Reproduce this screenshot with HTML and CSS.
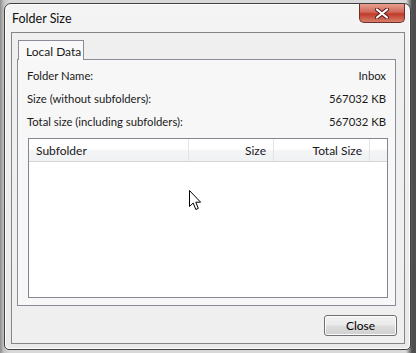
FILE: index.html
```html
<!DOCTYPE html>
<html lang="en">
<head>
    <meta charset="UTF-8">
    <title>Folder Size</title>
    <link rel="stylesheet" href="styles.css">
</head>
<body>
    <div class="desktop">
        <div class="window">
            <div class="titlebar">
                <span class="title">Folder Size</span>
                <button class="close-x">
                    <svg width="14" height="11" viewBox="0 0 14 11">
                        <path d="M2 1.5 L12 9.5 M12 1.5 L2 9.5" stroke="#5a1a1a" stroke-width="4" stroke-linecap="round"/>
                        <path d="M2 1.5 L12 9.5 M12 1.5 L2 9.5" stroke="#ffffff" stroke-width="2.2" stroke-linecap="round"/>
                    </svg>
                </button>
            </div>
            <div class="client">
                <div class="tabs">
                    <div class="tab">Local Data</div>
                </div>
                <div class="panel">
                    <div class="row"><span>Folder Name:</span><span>Inbox</span></div>
                    <div class="row"><span>Size (without subfolders):</span><span>567032 KB</span></div>
                    <div class="row"><span>Total size (including subfolders):</span><span>567032 KB</span></div>
                    <div class="listbox">
                        <div class="list-header">
                            <div class="col col-name">Subfolder</div>
                            <div class="col col-size">Size</div>
                            <div class="col col-total">Total Size</div>
                            <div class="col col-fill"></div>
                        </div>
                    </div>
                </div>
                <div class="footer">
                    <button class="button">Close</button>
                </div>
            </div>
        </div>
        <svg class="cursor" width="13" height="22" viewBox="0 0 13 22">
            <path d="M0.5 0.5 L0.5 16.5 L4.2 13 L6.8 19.5 L9.3 18.4 L6.8 12.2 L11.6 12.2 Z" fill="#ffffff" stroke="#000000" stroke-width="1" stroke-linejoin="round"/>
        </svg>
    </div>
</body>
</html>
```

FILE: styles.css
```css
body {
    margin: 0;
    font-family: Lato, 'Open Sans', sans-serif;
    font-size: 11.3px;
    color: #1a1a1a;
}
.desktop {
    position: relative;
    width: 416px;
    height: 353px;
    overflow: hidden;
    background: linear-gradient(to right, #8d8d8d 0px, #c4c4c4 4px, #d8d8d8 10px, #d8d8d8 406px, #4e4e4e 412px);
    padding: 3px 0 0 4px;
    box-sizing: border-box;
}
.window {
    width: 407px;
    height: 347px;
    box-sizing: border-box;
    border: 1px solid #404040;
    border-radius: 7px 7px 5px 5px;
    background: linear-gradient(to bottom, #f4f4f4, #e9e9e9);
    box-shadow: inset 0 0 0 1px #ffffff;
}
.titlebar {
    height: 28px;
    display: flex;
    justify-content: space-between;
    align-items: flex-start;
}
.title {
    padding: 7px 0 0 7px;
    font-size: 12.5px;
    color: #111;
}
.close-x {
    width: 46px;
    height: 19px;
    margin: 0 5px 0 0;
    padding: 0;
    border: 1px solid #6e2e2e;
    border-top: none;
    border-radius: 0 0 5px 5px;
    background: linear-gradient(to bottom, #e8a090 0%, #d1685a 45%, #c03a2a 55%, #d7806a 100%);
    display: flex;
    align-items: center;
    justify-content: center;
}
.client {
    width: 394px;
    height: 312px;
    margin: 0 0 0 6px;
    box-sizing: border-box;
    border: 1px solid #858585;
    background: #efefef;
    padding: 7px 8px 0 5px;
    display: flex;
    flex-direction: column;
}
.tabs {
    display: flex;
    padding-left: 1px;
    height: 19px;
}
.tab {
    width: 66px;
    height: 20px;
    box-sizing: border-box;
    border: 1px solid #898c95;
    border-bottom: none;
    background: #f9f9f9;
    padding: 3px 0 0 7px;
    font-size: 12px;
    position: relative;
    z-index: 1;
}
.panel {
    height: 247px;
    box-sizing: border-box;
    border: 1px solid #898c95;
    background: #f7f7f7;
    padding: 4px 9px 0 9px;
}
.row {
    height: 23px;
    display: flex;
    justify-content: space-between;
    align-items: center;
}
.listbox {
    margin: 5px -2px 0 1px;
    height: 160px;
    box-sizing: border-box;
    border: 1px solid #828790;
    background: #fff;
}
.list-header {
    display: flex;
    height: 23px;
    box-sizing: border-box;
    border-bottom: 1px solid #d5d5d5;
    background: linear-gradient(to bottom, #ffffff 0%, #ffffff 45%, #f3f4f6 55%, #f1f2f4 100%);
    font-size: 12px;
}
.col {
    height: 100%;
    box-sizing: border-box;
    border-right: 1px solid #e3e4e6;
    display: flex;
    align-items: center;
}
.col-name {
    width: 160px;
    padding-left: 7px;
}
.col-size {
    width: 85px;
    justify-content: flex-end;
    padding-right: 7px;
}
.col-total {
    width: 96px;
    justify-content: flex-end;
    padding-right: 7px;
}
.col-fill {
    flex: 1;
    border-right: none;
}
.footer {
    display: flex;
    justify-content: flex-end;
    padding-top: 9px;
}
.button {
    width: 73px;
    height: 21px;
    margin-right: -1px;
    font-family: inherit;
    font-size: 12px;
    border: 1px solid #707070;
    border-radius: 3px;
    background: linear-gradient(to bottom, #f2f2f2 0%, #ebebeb 45%, #dddddd 55%, #cfcfcf 100%);
    box-shadow: inset 0 0 0 1px #fbfbfb;
    padding: 0;
    color: #000;
}
.cursor {
    position: absolute;
    left: 189px;
    top: 190px;
}
```
